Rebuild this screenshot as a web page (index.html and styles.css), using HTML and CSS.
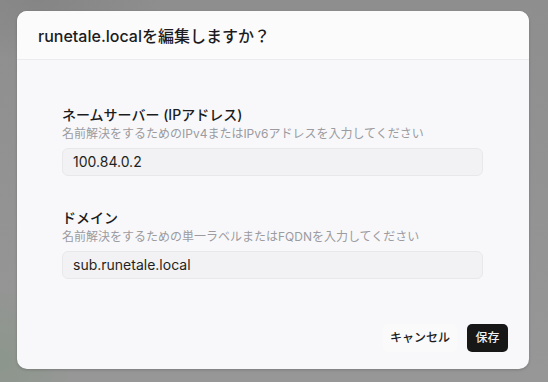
FILE: index.html
```html
<!DOCTYPE html>
<html lang="ja">
<head>
<meta charset="utf-8">
<title>runetale.localを編集しますか？</title>
<link rel="stylesheet" href="styles.css">
</head>
<body>
<div class="backdrop">
  <div class="dialog">
    <div class="dialog-header">
      <h2 class="dialog-title">runetale.localを編集しますか？</h2>
    </div>
    <div class="dialog-body">
      <div class="field">
        <div class="field-label">ネームサーバー (IPアドレス)</div>
        <div class="field-desc">名前解決をするためのIPv4またはIPv6アドレスを入力してください</div>
        <div class="field-input">100.84.0.2</div>
      </div>
      <div class="field">
        <div class="field-label">ドメイン</div>
        <div class="field-desc">名前解決をするための単一ラベルまたはFQDNを入力してください</div>
        <div class="field-input">sub.runetale.local</div>
      </div>
    </div>
    <div class="dialog-footer">
      <button class="btn btn-ghost">キャンセル</button>
      <button class="btn btn-primary">保存</button>
    </div>
  </div>
</div>
</body>
</html>
```

FILE: styles.css
```css
html, body {
  margin: 0;
  padding: 0;
}
body {
  width: 548px;
  height: 382px;
  overflow: hidden;
  font-family: Inter, "Noto Sans CJK JP", sans-serif;
  color: #1c1c1e;
}
.backdrop {
  width: 548px;
  height: 382px;
  box-sizing: border-box;
  padding: 11px 0 0 17px;
  background:
    radial-gradient(ellipse 120px 60px at 40px 0px, #858585, transparent),
    radial-gradient(ellipse 80px 80px at 0px 360px, #8c968c, transparent),
    linear-gradient(#8e8e8e, #979797);
}
.dialog {
  width: 512px;
  height: 358px;
  border-radius: 10px;
  background: #f8f8fa;
  box-shadow: 0 1px 3px rgba(0,0,0,0.18);
  display: flex;
  flex-direction: column;
  overflow: hidden;
}
.dialog-header {
  height: 48px;
  flex: none;
  background: #fbfbfc;
  border-bottom: 1px solid #ececef;
  display: flex;
  align-items: center;
  padding: 0 21px;
}
.dialog-title {
  margin: 0;
  font-size: 16px;
  font-weight: 500;
  line-height: 22px;
  padding-top: 1px;
  color: #1c1c1e;
}
.dialog-body {
  flex: 1;
  padding: 45px 46px 0 45px;
  display: flex;
  flex-direction: column;
  gap: 32px;
}
.field {
  display: flex;
  flex-direction: column;
}
.field-label {
  font-size: 14px;
  line-height: 20px;
  font-weight: 500;
  color: #1c1c1e;
}
.field-desc {
  font-size: 12px;
  line-height: 17px;
  color: #9b9ba0;
  margin-top: 0;
}
.field-input {
  margin-top: 6px;
  height: 28px;
  box-sizing: border-box;
  border: 1px solid #e8e8eb;
  border-radius: 6px;
  background: #f2f2f4;
  padding: 0 10px;
  font-size: 14px;
  line-height: 26px;
  color: #1f1f22;
}
.dialog-footer {
  flex: none;
  display: flex;
  justify-content: flex-end;
  align-items: center;
  gap: 10px;
  padding: 0 21px 17px 0;
}
.btn {
  height: 28px;
  border: none;
  border-radius: 5px;
  font-family: Inter, "Noto Sans CJK JP", sans-serif;
  font-size: 12px;
  font-weight: 500;
  line-height: 28px;
  cursor: pointer;
}
.btn-ghost {
  background: #fafafb;
  color: #1c1c1e;
  padding: 0 7px;
  width: 74px;
}
.btn-primary {
  background: #171717;
  color: #f2f2f2;
  padding: 0;
  width: 41px;
}
```
